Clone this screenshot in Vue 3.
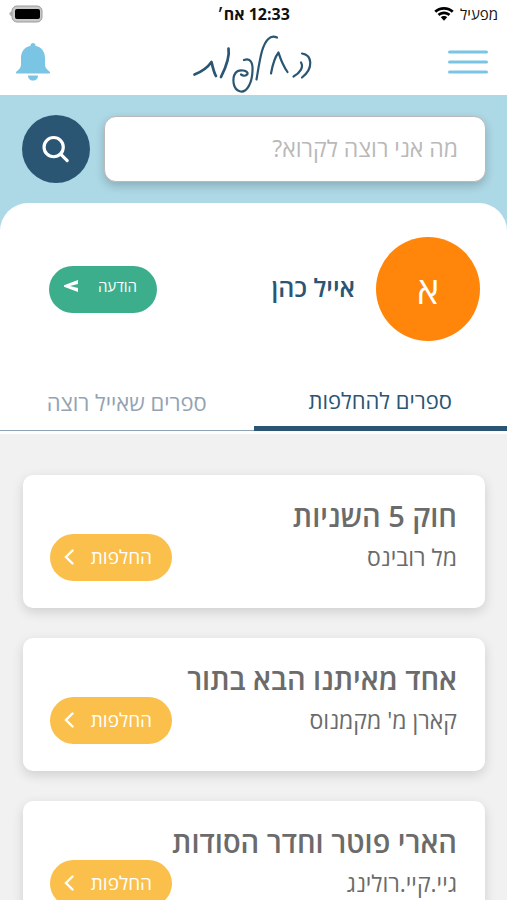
<template>
  <div class="app" dir="rtl" lang="he">
    <div class="status-bar">
      <div class="carrier">
        <span>מפעיל</span>
        <svg class="wifi" viewBox="0 0 20 14">
          <path d="M10 0C6.200 0 2.800 1.400 0.300 3.800l1.900 2C4.200 3.900 6.900 2.800 10 2.800s5.800 1.100 7.800 3l1.900-2C17.200 1.400 13.800 0 10 0z" />
          <path d="M10 4.600c-2.500 0-4.700 0.900-6.400 2.500l1.900 2C6.700 8 8.200 7.300 10 7.300s3.300 0.700 4.500 1.800l1.900-2C14.700 5.500 12.500 4.600 10 4.600z" />
          <path d="M10 9c-1.300 0-2.400 0.500-3.200 1.300L10 13.800l3.200-3.500C12.400 9.500 11.300 9 10 9z" />
        </svg>
      </div>
      <span class="time">12:33 אח׳</span>
      <div class="battery-side">
        <svg class="battery" viewBox="0 0 34 18">
          <path d="M3 6.500C1 6.500 0.300 7.600 0.300 8.700S1 11 3 11z" fill="#b5b5b5" />
          <rect x="3" y="1" width="30" height="16" rx="5" fill="#c9c9c9" stroke="#9b9b9b" />
          <rect x="6" y="4" width="25" height="10" rx="2" fill="#000" />
        </svg>
      </div>
    </div>

    <header class="header">
      <button class="icon-button" aria-label="תפריט">
        <svg class="menu-icon" viewBox="0 0 42 26">
          <path d="M2.500 3h37M2.500 13h37M2.500 23h37" fill="none" stroke="#7ac5e3" stroke-width="3" stroke-linecap="round" />
        </svg>
      </button>
      <svg class="logo" viewBox="-8 -5 128 64" role="img" aria-label="החלפות">
        <g fill="none" stroke="#2a5674" stroke-width="2.200" stroke-linecap="round" stroke-linejoin="round">
          <path d="M109 18.500C119 20 121 33 109 42.500" />
          <path d="M108 27.500C111 32 107 38 100.500 41.500" />
          <path d="M78 38.500C79.500 30 82 22 85.500 17.500C87 22 89 29 94.500 37" />
          <path d="M84 2.500C77-1 72 6 69 16C66.500 25 65 36 63.500 44.500" />
          <path d="M51 25C58 22 60 29 59.500 36C59 48 54 57.500 47.500 56.500C39.500 55 39 43 42.500 38C46 33 56 36 54.500 39C53 41 50 41 48 39.500" />
          <path d="M35.500 13.500C37 22 32 34 28 42" stroke-width="2.700" />
          <path d="M1.500 39.500C8 37 15 32 18.500 27C20 33 21 38 23 41" stroke-width="2.700" />
        </g>
      </svg>
      <button class="icon-button" aria-label="התראות">
        <svg class="bell-icon" viewBox="0 0 36 40" fill="#7ac5e3">
          <path d="M18 1C16.600 1 15.500 2.100 15.500 3.700C9.500 5 6 9.500 6 16V22.500C6 26 4 27.500 1.500 29.500C0.500 30.500 0.800 31.500 2 31.500H34C35.200 31.500 35.500 30.500 34.500 29.500C32 27.500 30 26 30 22.500V16C30 9.500 26.500 5 20.500 3.700C20.500 2.100 19.400 1 18 1z" />
          <path d="M13 33.500H23C23 36.500 21 38.500 18 38.500S13 36.500 13 33.500z" />
        </svg>
      </button>
    </header>

    <form class="search" @submit.prevent>
      <input v-model="query" class="search-input" type="text" placeholder="מה אני רוצה לקרוא?" aria-label="חיפוש" />
      <button class="search-button" aria-label="חיפוש">
        <svg viewBox="0 0 30 30">
          <g fill="none" stroke="#fff" stroke-width="3.400" stroke-linecap="round">
            <circle cx="12.500" cy="13" r="10.300" />
            <path d="M20 20.500L27 27.500" />
          </g>
        </svg>
      </button>
    </form>

    <section class="profile">
      <div class="user">
        <div class="avatar">א</div>
        <h1 class="user-name">אייל כהן</h1>
        <button class="message-button">
          <span>הודעה</span>
          <svg viewBox="0 0 14 12" fill="#fff">
            <path d="M14 0V4L6 6L14 8V12L0 6.800V5.200z" />
          </svg>
        </button>
      </div>
      <div class="tabs" role="tablist">
        <button
          v-for="tab in tabs"
          :key="tab.id"
          class="tab"
          :class="{ active: tab.id === activeTab }"
          role="tab"
          :aria-selected="tab.id === activeTab"
          @click="activeTab = tab.id"
        >
          {{ tab.label }}
        </button>
      </div>
    </section>

    <main class="book-list">
      <article v-for="book in books" :key="book.id" class="book-card">
        <h2 class="book-title">{{ book.title }}</h2>
        <div class="book-row">
          <p class="book-author">{{ book.author }}</p>
          <button class="swap-button">
            <span>החלפות</span>
            <svg viewBox="0 0 10 16">
              <path d="M8.500 1.500L2 8L8.500 14.500" fill="none" stroke="#fff" stroke-width="2.400" stroke-linecap="round" />
            </svg>
          </button>
        </div>
      </article>
    </main>
  </div>
</template>

<script setup>
import { ref } from "vue";

const query = ref("");
const activeTab = ref("swap");

const tabs = [
  { id: "swap", label: "ספרים להחלפות" },
  { id: "wanted", label: "ספרים שאייל רוצה" },
];

const books = ref([
  { id: 1, title: "חוק 5 השניות", author: "מל רובינס" },
  { id: 2, title: "אחד מאיתנו הבא בתור", author: "קארן מ' מקמנוס" },
  { id: 3, title: "הארי פוטר וחדר הסודות", author: "גיי.קיי.רולינג" },
]);
</script>

<style>
body {
  margin: 0;
  background: #f1f1f1;
}
</style>

<style scoped>
.app {
  height: 100vh;
  overflow: hidden;
  background: #f1f1f1;
  font-family: "Open Sans", "Noto Sans", sans-serif;
}

button,
input {
  font-family: inherit;
  border: none;
  padding: 0;
}

button {
  cursor: pointer;
}

h1,
h2,
p {
  margin: 0;
}

svg {
  display: block;
}

.status-bar {
  display: grid;
  grid-template-columns: 1fr auto 1fr;
  align-items: center;
  height: 28px;
  padding: 0 9px;
  background: #fff;
  color: #111;
}

.carrier {
  display: flex;
  align-items: center;
  gap: 6px;
  font-size: 15px;
}

.wifi {
  width: 20px;
  height: 14px;
}

.time {
  font-size: 16px;
  font-weight: 700;
}

.battery-side {
  display: flex;
  justify-content: flex-end;
}

.battery {
  width: 34px;
  height: 18px;
}

.header {
  display: flex;
  align-items: center;
  justify-content: space-between;
  height: 67px;
  padding: 0 18px 0 15px;
  background: #fff;
}

.icon-button {
  background: none;
}

.menu-icon {
  width: 42px;
  height: 26px;
}

.bell-icon {
  width: 36px;
  height: 40px;
}

.logo {
  width: 128px;
  height: 64px;
}

.search {
  display: flex;
  align-items: center;
  gap: 14px;
  padding: 20px 21px 48px 22px;
  background: #add8e6;
}

.search-input {
  flex: 1;
  min-width: 0;
  height: 66px;
  box-sizing: border-box;
  padding: 0 27px 2px;
  border: 1px solid #b9b9b9;
  border-radius: 12px;
  background: #fff;
  box-shadow: 0 4px 10px rgba(0, 0, 0, 0.2);
  color: #555;
  font-size: 23px;
}

.search-input::placeholder {
  color: #b9b9b9;
  opacity: 1;
}

.search-button {
  display: flex;
  align-items: center;
  justify-content: center;
  width: 68px;
  height: 68px;
  border-radius: 50%;
  background: #2a5674;
}

.search-button svg {
  width: 28px;
  height: 28px;
}

.profile {
  margin-top: -28px;
  padding-top: 34px;
  border-bottom: 3px solid #fff;
  border-radius: 28px 28px 0 0;
  background: #fff;
}

.user {
  display: flex;
  align-items: center;
  gap: 21px;
  padding: 0 27px 0 49px;
}

.avatar {
  display: flex;
  align-items: center;
  justify-content: center;
  width: 104px;
  height: 104px;
  border-radius: 50%;
  background: #ff860a;
  color: #fff;
  font-size: 37px;
}

.user-name {
  padding-bottom: 4px;
  color: #2a5674;
  font-size: 25px;
  font-weight: 600;
}

.message-button {
  display: flex;
  align-items: center;
  justify-content: space-between;
  width: 108px;
  height: 47px;
  margin-right: auto;
  padding: 0 20px 6px 15px;
  border-radius: 24px;
  background: #3dae8b;
  color: #fff;
  font-size: 15px;
}

.message-button svg {
  width: 14px;
  height: 12px;
}

.tabs {
  display: flex;
  height: 90px;
}

.tab {
  flex: 1;
  padding-top: 32px;
  border-bottom: 1px solid #8ea2b5;
  background: none;
  color: #93a3b3;
  font-size: 22px;
}

.tab.active {
  border-bottom: 5px solid #2a5674;
  color: #2a5674;
}

.book-list {
  display: flex;
  flex-direction: column;
  gap: 30px;
  padding: 41px 22px 30px 23px;
}

.book-card {
  height: 133px;
  box-sizing: border-box;
  padding: 22px 28px 0 27px;
  border-radius: 10px;
  background: #fff;
  box-shadow: 0 4px 12px rgba(0, 0, 0, 0.14);
  color: #6b6b6b;
}

.book-title {
  font-size: 29px;
  font-weight: 600;
  line-height: 37px;
}

.book-row {
  display: flex;
  align-items: center;
  justify-content: space-between;
}

.book-author {
  padding-bottom: 2px;
  font-size: 23px;
}

.swap-button {
  display: flex;
  align-items: center;
  justify-content: space-between;
  width: 122px;
  height: 47px;
  padding: 0 20px 2px 14px;
  border-radius: 24px;
  background: #fac04b;
  color: #fff;
  font-size: 19px;
}

.swap-button svg {
  width: 10px;
  height: 16px;
}
</style>
